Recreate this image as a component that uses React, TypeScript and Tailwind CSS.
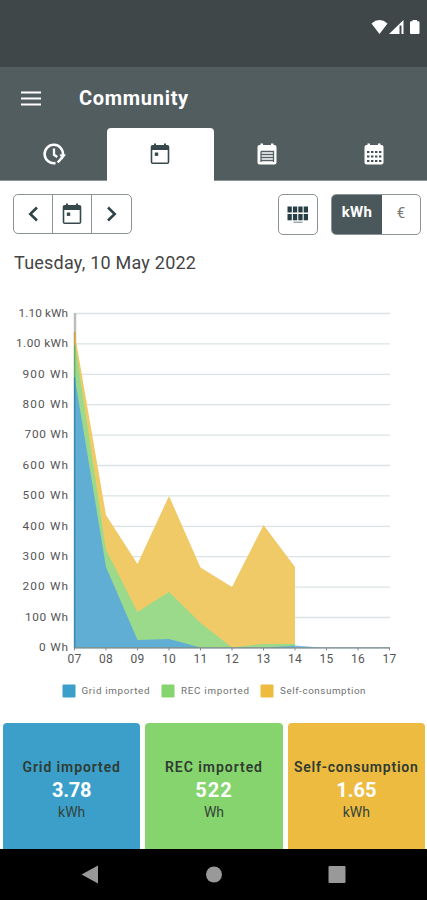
import React from "react";

const hours = ["07", "08", "09", "10", "11", "12", "13", "14", "15", "16", "17"];

const levels = [
  { text: "1.10 kWh", width: 49.5 },
  { text: "1.00 kWh", width: 52 },
  { text: "900 Wh", width: 45.5 },
  { text: "800 Wh", width: 45.5 },
  { text: "700 Wh", width: 43.5 },
  { text: "600 Wh", width: 45.5 },
  { text: "500 Wh", width: 45.5 },
  { text: "400 Wh", width: 45.5 },
  { text: "300 Wh", width: 45.5 },
  { text: "200 Wh", width: 45.5 },
  { text: "100 Wh", width: 43 },
  { text: "0 Wh", width: 29 },
];

const cards = [
  { title: "Grid imported", value: "3.78", unit: "kWh", color: "bg-[#3b9fca]", tracking: "tracking-[0.9px]", valueTracking: "tracking-[-0.2px]" },
  { title: "REC imported", value: "522", unit: "Wh", color: "bg-[#86d46d]", tracking: "tracking-[0.95px]", valueTracking: "tracking-[1px]" },
  { title: "Self-consumption", value: "1.65", unit: "kWh", color: "bg-[#eebb41]", tracking: "tracking-[0.8px]", valueTracking: "tracking-[0px]" },
];

const StatusBar = () => {
  return (
    <div className="flex h-[67px] justify-end bg-[#3f4749] pt-[19px] pr-[6px]">
      <svg width="50" height="16" viewBox="0 0 50 16" fill="#fff">
        <path d="M0.500 4.500Q8.500-2.300 16.500 4.500L8.500 15Z" />
        <path d="M18 15L32.500 1V15H30.500V6.500H28.500V15Z" />
        <path d="M41.500 1h4.500v1.200h1.500q1 0 1 1v10.800q0 1-1 1h-7.500q-1 0-1-1v-10.800q0-1 1-1h1.500z" />
      </svg>
    </div>
  );
};

const ClockIcon = () => {
  return (
    <svg className="ml-px" width="24" height="24" viewBox="0 0 24 24" fill="none" stroke="#fff" strokeWidth="2.500">
      <path d="M13.500 21.100A9.200 9.200 0 1 1 20.900 13.500" />
      <path d="M15.700 20.500L20.500 15" />
      <path d="M17.500 12.500h6.500l-3.800 5z" fill="#fff" stroke="none" />
      <path d="M12 6.500v6.300l3.300 2.200" strokeWidth="2.300" />
    </svg>
  );
};

const DayIcon = () => {
  return (
    <svg width="24" height="24" viewBox="0 0 24 24" fill="#37484c">
      <path d="M19.500 3H18V1.500h-2V3H8V1.500H6V3H4.500a2 2 0 0 0-1.800 2v15a2 2 0 0 0 2 2h14.600a2 2 0 0 0 2-2V5a2 2 0 0 0-1.800-2zm.2 17.400H4.300V8h15.400z" fillRule="evenodd" />
      <path d="M6.800 10.500h3.400v3.400H6.800z" />
    </svg>
  );
};

const WeekIcon = () => {
  return (
    <svg width="24" height="24" viewBox="0 0 24 24">
      <path fill="#fff" d="M5.500 1.500H8V3h8V1.500h2.500V3h1a2 2 0 0 1 2 2v15.500a2 2 0 0 1-2 2h-15a2 2 0 0 1-2-2V5a2 2 0 0 1 2-2h1z" />
      <path d="M6 9.500h12.500v10.500M6 9.500v10.500M6 12.500h12.500M6 15.500h12.500M6 18.500h12.500" fill="none" stroke="#566164" strokeWidth="1.300" />
    </svg>
  );
};

const MonthIcon = () => {
  return (
    <svg width="24" height="24" viewBox="0 0 24 24">
      <path fill="#fff" d="M5.500 1.500H8V3h8V1.500h2.500V3h1a2 2 0 0 1 2 2v15.500a2 2 0 0 1-2 2h-15a2 2 0 0 1-2-2V5a2 2 0 0 1 2-2h1z" />
      <g stroke="#435054" strokeWidth="2.200" strokeDasharray="2.400 1.600">
        <path d="M5 10h14.500" />
        <path d="M5 14.500h14.500" />
        <path d="M5 19h14.500" />
      </g>
    </svg>
  );
};

const PanelIcon = () => {
  return (
    <svg width="22" height="18" viewBox="0 0 22 18" fill="#263f45">
      {[0, 5.400, 10.800, 16.200].map((x) => (
        <g key={x}>
          <rect x={x + 0.500} y="0.500" width="4.300" height="6" />
          <rect x={x + 0.500} y="8" width="4.300" height="6.300" />
        </g>
      ))}
      <path d="M6.500 15.700h9v1h-9z" opacity="0.65" />
    </svg>
  );
};

const Header = () => {
  return (
    <header className="flex h-[114px] flex-col bg-[#525d5f]">
      <div className="flex h-[61px] items-center">
        <svg className="ml-[21px]" width="20" height="16" stroke="#fff" strokeWidth="2.200">
          <path d="M0 2.500h20M0 8.500h20M0 14.500h20" />
        </svg>
        <h1 className="ml-[38px] text-[20px] leading-none font-bold tracking-[0.700px] text-white">Community</h1>
      </div>
      <nav className="grid grow grid-cols-4 border-b border-[#8c9598]">
        <div className="flex items-center justify-center"><ClockIcon /></div>
        <div className="-mb-px flex items-center justify-center rounded-t-[4px] bg-white pb-px"><DayIcon /></div>
        <div className="flex items-center justify-center"><WeekIcon /></div>
        <div className="flex items-center justify-center"><MonthIcon /></div>
      </nav>
    </header>
  );
};

const Toolbar = () => {
  return (
    <div className="flex justify-between pt-[13px] pr-[6px] pl-[13px]">
      <div className="grid h-10 w-[119px] grid-cols-3 divide-x divide-[#8b9395] rounded-[5px] border border-[#8b9395]">
        <button className="flex items-center justify-center">
          <svg width="12" height="16" fill="none" stroke="#2f4347" strokeWidth="2.600">
            <path d="M10 1.500L3.300 8l6.700 6.500" />
          </svg>
        </button>
        <button className="flex items-center justify-center"><DayIcon /></button>
        <button className="flex items-center justify-center">
          <svg width="12" height="16" fill="none" stroke="#2f4347" strokeWidth="2.600">
            <path d="M2 1.500L8.700 8l-6.700 6.500" />
          </svg>
        </button>
      </div>
      <div className="flex gap-[13px]">
        <button className="flex h-[41px] w-10 items-center justify-center rounded-[5px] border border-[#8b9395]">
          <PanelIcon />
        </button>
        <div className="flex h-[41px] w-[90px] overflow-hidden rounded-[5px] border border-[#8b9395] text-[15px]">
          <button className="w-[50px] bg-[#4b585b] pb-1 font-bold tracking-[0.400px] text-white">kWh</button>
          <button className="grow pb-0.5 text-[15px] text-[#777]">€</button>
        </div>
      </div>
    </div>
  );
};

const Chart = () => {
  return (
    <svg className="block" width="427" height="428" viewBox="0 285 427 428" fontFamily="Roboto, sans-serif">
      {levels.map((level, i) => (
        <g key={level.text}>
          <path d={`M75 ${313.5 + i * 30.4}H390`} stroke="#d9e3e5" strokeWidth="1.300" />
          <text x={68 - level.width} y={316.8 + i * 30.4} textLength={level.width} fontSize="11.800" fill="#555">
            {level.text}
          </text>
        </g>
      ))}
      <path d="M75 313V648" stroke="#bdbdbd" strokeWidth="2.500" />
      <path d="M74.500 332L106 515L137.500 564L169 496L200.500 567.500L232 587L263.500 525L295 567V647.500H74.500Z" fill="#efca67" />
      <path d="M74.500 340L106 550L137.500 612L169 592L200.500 623L232 647.500L263.500 644L295 644V647.500H74.500Z" fill="#9bda8b" />
      <path d="M74.500 376L106 567L137.500 640L169 639L200.500 647.500H74.500Z" fill="#61aed4" />
      <path d="M264 647.500L295 645.500L320 647.500Z" fill="#61aed4" opacity="0.800" />
      <path d="M74.700 332V345" stroke="#c9a23c" strokeWidth="1.500" />
      <path d="M74.700 345V377" stroke="#6fae62" strokeWidth="1.500" />
      <path d="M74.700 377V648" stroke="#388dad" strokeWidth="1.500" />
      <path d="M74 647.800H390" stroke="#71868a" strokeWidth="1.200" />
      {hours.map((hour, i) => (
        <g key={hour}>
          <path d={`M${74.5 + i * 31.5} 648v2.500`} stroke="#888" />
          <text x={74.5 + i * 31.5} y="662.500" textAnchor="middle" fontSize="12" letterSpacing="0.300" fill="#555">
            {hour}
          </text>
        </g>
      ))}
      <g fontSize="9.800" fill="#707070">
        <rect x="62.500" y="684.500" width="13" height="13" rx="1" fill="#3b9fca" />
        <text x="81.500" y="694" textLength="68">Grid imported</text>
        <rect x="161.500" y="684.500" width="13" height="13" rx="1" fill="#86d46d" />
        <text x="181" y="694" textLength="68">REC imported</text>
        <rect x="260.500" y="684.500" width="13" height="13" rx="1" fill="#eebb41" />
        <text x="280" y="694" textLength="85.500">Self-consumption</text>
      </g>
    </svg>
  );
};

const App = () => {
  return (
    <div className="flex h-[900px] w-[427px] flex-col overflow-hidden bg-white font-[Roboto,sans-serif]">
      <StatusBar />
      <Header />
      <main className="flex grow flex-col">
        <Toolbar />
        <h2 className="mt-[18px] h-[32px] pl-3.5 text-[18px] leading-5 tracking-[0.230px] text-[#444]">Tuesday, 10 May 2022</h2>
        <Chart />
        <div className="mt-auto grid h-[126px] grid-cols-3 gap-[5px] pr-0.5 pl-[3px]">
          {cards.map((card) => (
            <div key={card.title} className={`flex flex-col items-center rounded-t-[4px] pt-[35px] whitespace-nowrap ${card.color}`}>
              <div className={`text-[14px] leading-[18px] font-semibold text-[#303b32] ${card.tracking}`}>{card.title}</div>
              <div className={`mt-0.5 text-[20px] leading-6 font-bold text-white ${card.valueTracking}`}>{card.value}</div>
              <div className="mt-px text-[14px] leading-[18px] text-[#34443a]">{card.unit}</div>
            </div>
          ))}
        </div>
      </main>
      <footer className="h-[51px] bg-black">
        <svg width="427" height="51" fill="#999">
          <path d="M81.500 25.500L98 16.500V34.500Z" />
          <circle cx="214" cy="25.500" r="8" />
          <rect x="328.500" y="17" width="17" height="17" rx="1" />
        </svg>
      </footer>
    </div>
  );
};

export default App;
